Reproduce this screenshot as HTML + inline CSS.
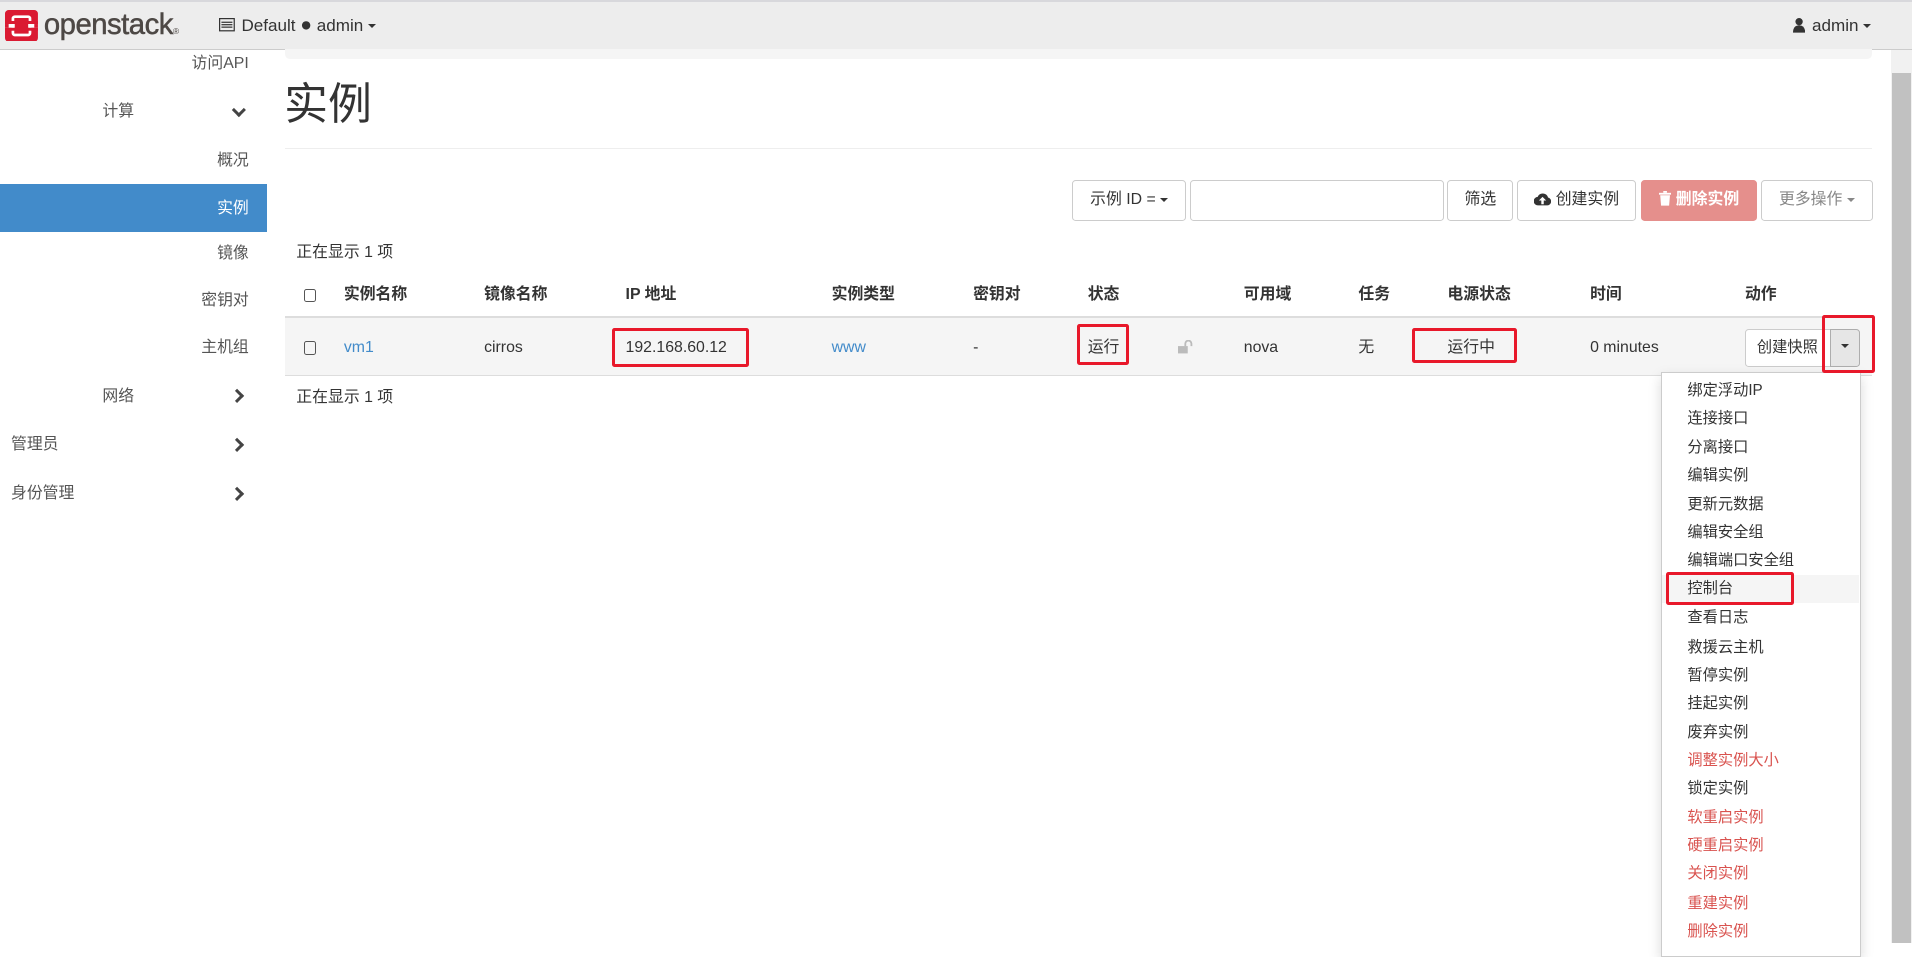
<!DOCTYPE html>
<html><head><meta charset="utf-8">
<style>
html{zoom:1.21939;}
*{box-sizing:border-box;margin:0;padding:0}
body{width:1568px;height:773px;overflow:hidden;background:#fff;font-family:"Liberation Sans","Noto Sans CJK SC",sans-serif;font-size:13px;color:#333;position:relative}
.a{position:absolute;white-space:nowrap;line-height:16px}
.top{position:absolute;left:0;top:0;width:1568px;height:41px;background:#ededed;border-top:2px solid #d8d8dc;border-bottom:1px solid #ccc}
.side{font-size:13px;color:#555}
.act{position:absolute;left:0;top:151px;width:219px;height:39px;background:#428bca}
.chev{position:absolute;width:8px;height:8px;border-right:2.5px solid #444;border-bottom:2.5px solid #444}
.btn{position:absolute;top:148px;height:33px;border:1px solid #ccc;border-radius:3px;background:#fff;text-align:center;line-height:31px;font-size:13px}
.h{font-weight:bold}
.cb{position:absolute;width:10px;height:11px;border:1px solid #555;border-radius:2px}
.rb{position:absolute;border:3px solid #e8182a;border-radius:2px}
.menu{position:absolute;left:1362px;top:305px;width:164px;height:480px;background:#fff;border:1px solid #ccc;box-shadow:0 4px 10px rgba(0,0,0,.15)}
.mi{position:absolute;left:21px;font-size:12.5px;color:#333;white-space:nowrap;line-height:16px}
.red{color:#d9534f}
.caret{display:inline-block;width:0;height:0;border-left:4px solid transparent;border-right:4px solid transparent;border-top:4px solid #333;vertical-align:middle}
</style></head><body>
<div class="top"></div>
<svg class="a" style="left:4px;top:8px" width="27" height="26" viewBox="0 0 27 26"><rect width="27" height="26" rx="3" fill="#da1a32"/><rect x="6.5" y="5.5" width="14" height="15" rx="1.5" fill="none" stroke="#fff" stroke-width="2.2"/><rect x="0" y="9" width="27" height="2.5" fill="#da1a32"/><rect x="0" y="14.5" width="27" height="2.5" fill="#da1a32"/><rect x="0" y="11.5" width="8" height="3" fill="#fff"/><rect x="19" y="11.5" width="8" height="3" fill="#fff"/><rect x="0" y="11.5" width="3" height="3" fill="#da1a32"/><rect x="24" y="11.5" width="3" height="3" fill="#da1a32"/></svg>
<div class="a" style="left:36px;top:8px;font-size:24px;line-height:26px;color:#4d4845;letter-spacing:-0.4px;-webkit-text-stroke:0.4px #4d4845">openstack<span style="font-size:7px;-webkit-text-stroke:0">®</span></div>
<svg class="a" style="left:180px;top:15px" width="13" height="11" viewBox="0 0 13 11"><rect x=".5" y=".5" width="12" height="10" fill="none" stroke="#333"/><rect x="2" y="3" width="9" height="1" fill="#333"/><rect x="2" y="5" width="9" height="1" fill="#333"/><rect x="2" y="7" width="9" height="1" fill="#333"/></svg>
<div class="a" style="left:198px;top:13px;font-size:14px">Default <span style="font-size:16px">●</span> admin <span class="caret"></span></div>
<svg class="a" style="left:1470px;top:15px" width="10" height="12" viewBox="0 0 10 12"><circle cx="5" cy="3" r="3" fill="#333"/><path d="M0 12 Q0 6 5 6 Q10 6 10 12Z" fill="#333"/></svg>
<div class="a" style="left:1486px;top:13px;font-size:14px">admin <span class="caret"></span></div>
<div class="a" style="left:1551px;top:41px;width:17px;height:732px;background:#f1f1f1"></div>
<div class="a" style="left:1552px;top:60px;width:15px;height:713px;background:#c1c1c1"></div>

<div class="a" style="left:234px;top:40px;width:1301px;height:8px;background:#f5f5f5;border-radius:0 0 4px 4px"></div>

<div class="act"></div>
<div class="a side" style="right:1364px;top:44px">访问API</div>
<div class="a side" style="left:84px;top:84px">计算</div>
<div class="chev" style="left:192px;top:86px;transform:rotate(45deg)"></div>
<div class="a side" style="right:1364px;top:124px">概况</div>
<div class="a side" style="right:1364px;top:163px;color:#fff">实例</div>
<div class="a side" style="right:1364px;top:200px">镜像</div>
<div class="a side" style="right:1364px;top:239px">密钥对</div>
<div class="a side" style="right:1364px;top:277px">主机组</div>
<div class="a side" style="left:84px;top:317px">网络</div>
<div class="chev" style="left:190px;top:321px;transform:rotate(-45deg)"></div>
<div class="a side" style="left:9px;top:357px">管理员</div>
<div class="chev" style="left:190px;top:361px;transform:rotate(-45deg)"></div>
<div class="a side" style="left:9px;top:397px">身份管理</div>
<div class="chev" style="left:190px;top:401px;transform:rotate(-45deg)"></div>

<div class="a" style="left:233px;top:65px;font-size:36px;line-height:42px">实例</div>
<div class="a" style="left:234px;top:121px;width:1301px;height:1px;background:#eee"></div>

<div class="btn" style="left:879px;width:94px">示例 ID = <span class="caret"></span></div>
<div class="btn" style="left:976px;width:208px"></div>
<div class="btn" style="left:1187px;width:54px">筛选</div>
<div class="btn" style="left:1244px;width:98px"><svg width="14" height="11" viewBox="0 0 14 11" style="vertical-align:-1px"><path d="M3.5 11 A3.5 3.5 0 0 1 3 4 A4.5 4.5 0 0 1 11.5 4.5 A3.3 3.3 0 0 1 11 11Z" fill="#333"/><path d="M7 4 L10 7 H8 V10 H6 V7 H4Z" fill="#fff"/></svg> 创建实例</div>
<div class="btn" style="left:1346px;width:95px;background:#e58f8c;border-color:#e58f8c;color:#fff;font-weight:bold"><svg width="10" height="12" viewBox="0 0 10 12" style="vertical-align:-1px"><rect x="0" y="1.5" width="10" height="1.5" fill="#fff"/><rect x="3.5" y="0" width="3" height="1.5" fill="#fff"/><path d="M1 3.5 H9 L8.3 12 H1.7Z" fill="#fff"/></svg> 删除实例</div>
<div class="btn" style="left:1444px;width:92px;color:#888">更多操作 <span class="caret" style="border-top-color:#888"></span></div>

<div class="a" style="left:243px;top:199px">正在显示 1 项</div>

<div class="a" style="left:234px;top:259px;width:1301px;height:2px;background:#ddd"></div>
<div class="a" style="left:234px;top:261px;width:1301px;height:47px;background:#f5f5f5;border-bottom:1px solid #ddd"></div>
<div class="cb" style="left:249px;top:237px"></div>
<div class="cb" style="left:249px;top:280px"></div>
<div class="a h" style="left:282px;top:234px">实例名称</div>
<div class="a h" style="left:397px;top:234px">镜像名称</div>
<div class="a h" style="left:513px;top:234px">IP 地址</div>
<div class="a h" style="left:682px;top:234px">实例类型</div>
<div class="a h" style="left:798px;top:234px">密钥对</div>
<div class="a h" style="left:892px;top:234px">状态</div>
<div class="a h" style="left:1020px;top:234px">可用域</div>
<div class="a h" style="left:1114px;top:234px">任务</div>
<div class="a h" style="left:1187px;top:234px">电源状态</div>
<div class="a h" style="left:1304px;top:234px">时间</div>
<div class="a h" style="left:1431px;top:234px">动作</div>

<div class="a" style="left:282px;top:277px;color:#428bca">vm1</div>
<div class="a" style="left:397px;top:277px">cirros</div>
<div class="a" style="left:513px;top:277px">192.168.60.12</div>
<div class="a" style="left:682px;top:277px;color:#428bca">www</div>
<div class="a" style="left:798px;top:277px">-</div>
<div class="a" style="left:892px;top:277px">运行</div>
<svg class="a" style="left:966px;top:279px" width="12" height="11" viewBox="0 0 12 11"><rect x="0" y="5" width="8" height="6" fill="#bbb"/><path d="M6 5 V3 A2.5 2.5 0 0 1 11 3 V5" fill="none" stroke="#bbb" stroke-width="1.5"/></svg>
<div class="a" style="left:1020px;top:277px">nova</div>
<div class="a" style="left:1114px;top:277px">无</div>
<div class="a" style="left:1187px;top:277px">运行中</div>
<div class="a" style="left:1304px;top:277px">0 minutes</div>
<div class="a" style="left:1431px;top:270px;width:71px;height:31px;border:1px solid #ccc;border-radius:3px 0 0 3px;background:#fff;line-height:29px;padding-left:9px;font-size:12.5px">创建快照</div>
<div class="a" style="left:1501px;top:270px;width:24px;height:31px;border:1px solid #adadad;border-radius:0 3px 3px 0;background:#e6e6e6;text-align:center;line-height:27px"><span class="caret"></span></div>

<div class="a" style="left:243px;top:318px">正在显示 1 项</div>

<div class="menu">
<div class="a" style="left:0;top:166px;width:162px;height:23px;background:#f5f5f5"></div>
<div class="mi" style="top:7px">绑定浮动IP</div>
<div class="mi" style="top:30px">连接接口</div>
<div class="mi" style="top:53px">分离接口</div>
<div class="mi" style="top:76px">编辑实例</div>
<div class="mi" style="top:100px">更新元数据</div>
<div class="mi" style="top:123px">编辑安全组</div>
<div class="mi" style="top:146px">编辑端口安全组</div>
<div class="mi" style="top:169px">控制台</div>
<div class="mi" style="top:193px">查看日志</div>
<div class="mi" style="top:217px">救援云主机</div>
<div class="mi" style="top:240px">暂停实例</div>
<div class="mi" style="top:263px">挂起实例</div>
<div class="mi" style="top:287px">废弃实例</div>
<div class="mi red" style="top:310px">调整实例大小</div>
<div class="mi" style="top:333px">锁定实例</div>
<div class="mi red" style="top:357px">软重启实例</div>
<div class="mi red" style="top:380px">硬重启实例</div>
<div class="mi red" style="top:403px">关闭实例</div>
<div class="mi red" style="top:427px">重建实例</div>
<div class="mi red" style="top:450px">删除实例</div>
</div>

<div class="rb" style="left:502px;top:269px;width:112px;height:32px"></div>
<div class="rb" style="left:883px;top:266px;width:43px;height:33px"></div>
<div class="rb" style="left:1158px;top:269px;width:86px;height:29px"></div>
<div class="rb" style="left:1494px;top:258px;width:44px;height:48px"></div>
<div class="rb" style="left:1366px;top:469px;width:105px;height:27px"></div>
</body></html>
